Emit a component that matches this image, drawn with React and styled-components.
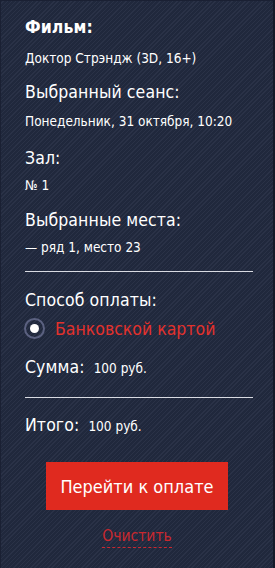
import React from "react";
import styled, { createGlobalStyle } from "styled-components";

const GlobalStyle = createGlobalStyle`
  html, body {
    margin: 0;
    padding: 0;
    background: #1f263b;
  }
  * {
    box-sizing: border-box;
  }
`;

const Panel = styled.div`
  width: 275px;
  height: 568px;
  padding: 16px 23px 0 24px;
  font-family: "DejaVu Sans Condensed", "DejaVu Sans", sans-serif;
  color: #ffffff;
  background-color: #222a40;
  background-image: repeating-linear-gradient(
    -45deg,
    rgba(255, 255, 255, 0.035) 0 1px,
    rgba(0, 0, 0, 0.06) 1px 3px
  );
  border-top: 1px solid #1a2033;
  border-left: 1px solid #1a2033;
  border-right: 2px solid #151a29;
  display: flex;
  flex-direction: column;
`;

const Block = styled.div`
  display: flex;
  flex-direction: column;
  gap: ${p => p.gap ?? 8}px;
  margin-bottom: ${p => p.mb ?? 14}px;
`;

const Label = styled.div`
  font-size: 17.5px;
  line-height: 20px;
  letter-spacing: 0.1px;
  font-weight: ${p => (p.bold ? 700 : 400)};
`;

const Value = styled.div`
  font-size: 13.5px;
  line-height: 18px;
`;

const Divider = styled.hr`
  border: 0;
  border-top: 1px solid #d9dbe2;
  margin: 0 0 ${p => p.mb ?? 18}px;
  width: 228px;
`;

const Option = styled.label`
  display: flex;
  align-items: center;
  gap: 10px;
  margin: 8px 0 18px -1px;
`;

const Radio = styled.span`
  width: 21px;
  height: 21px;
  border-radius: 50%;
  border: 2px solid #5b6180;
  display: flex;
  align-items: center;
  justify-content: center;
  &::after {
    content: "";
    width: 9px;
    height: 9px;
    border-radius: 50%;
    background: #ffffff;
  }
`;

const OptionText = styled.span`
  color: #e3312c;
  font-size: 17.5px;
  line-height: 20px;
`;

const Row = styled.div`
  display: flex;
  align-items: baseline;
  gap: 9px;
  height: 20px;
  margin-bottom: ${p => p.mb ?? 20}px;
`;

const Small = styled.span`
  font-size: 13.5px;
`;

const Actions = styled.div`
  display: flex;
  flex-direction: column;
  align-items: center;
  margin-top: 27px;
  margin-left: -1px;
`;

const PayButton = styled.button`
  width: 182px;
  height: 48px;
  border: 0;
  background: #e02a1f;
  color: #ffffff;
  font-family: inherit;
  font-size: 18px;
  cursor: pointer;
`;

const ClearLink = styled.a`
  margin-top: 17px;
  color: #c9282f;
  font-size: 15.5px;
  line-height: 18px;
  padding-bottom: 2px;
  border-bottom: 1px dashed #c9282f;
  cursor: pointer;
`;

export default function App() {
  return (
    <>
      <GlobalStyle />
      <Panel>
        <Block gap={12} mb={15}>
          <Label bold>Фильм:</Label>
          <Value>Доктор Стрэндж (3D, 16+)</Value>
        </Block>
        <Block gap={10} mb={18}>
          <Label>Выбранный сеанс:</Label>
          <Value>Понедельник, 31 октября, 10:20</Value>
        </Block>
        <Block gap={8} mb={16}>
          <Label>Зал:</Label>
          <Value>№ 1</Value>
        </Block>
        <Block gap={8} mb={15}>
          <Label>Выбранные места:</Label>
          <Value>— ряд 1, место 23</Value>
        </Block>
        <Divider mb={18} />
        <Label>Способ оплаты:</Label>
        <Option>
          <Radio />
          <OptionText>Банковской картой</OptionText>
        </Option>
        <Row mb={20}>
          <Label>Сумма:</Label>
          <Small>100 руб.</Small>
        </Row>
        <Divider mb={17} />
        <Row mb={0}>
          <Label>Итого:</Label>
          <Small>100 руб.</Small>
        </Row>
        <Actions>
          <PayButton>Перейти к оплате</PayButton>
          <ClearLink>Очистить</ClearLink>
        </Actions>
      </Panel>
    </>
  );
}
